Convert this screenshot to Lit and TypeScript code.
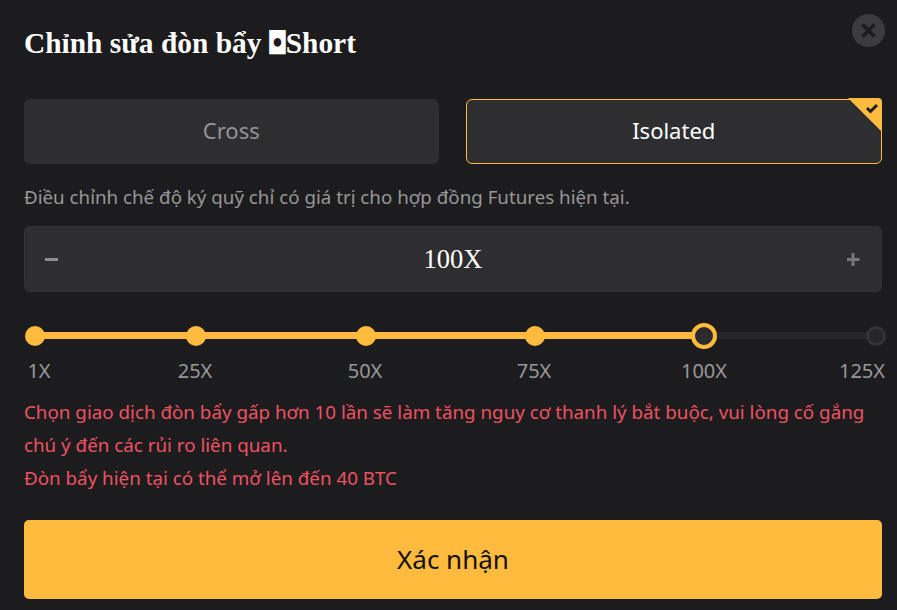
import { LitElement, html, css } from "lit";
import { customElement } from "lit/decorators.js";

const SANS = css`"Noto Sans", "Open Sans", sans-serif`;
const marks = [
  { label: "1X", dot: 11, text: 15, state: "on" },
  { label: "25X", dot: 172, text: 171, state: "on" },
  { label: "50X", dot: 342, text: 341, state: "on" },
  { label: "75X", dot: 511, text: 510, state: "on" },
  { label: "100X", dot: 680, text: 680, state: "cur" },
  { label: "125X", dot: 852, text: 838, state: "off" },
];

@customElement("app-root")
export class AppRoot extends LitElement {
  static styles = css`
    :host {
      display: block;
      position: relative;
      width: 897px;
      height: 610px;
      box-sizing: border-box;
      padding: 0 15px 0 24px;
      background: #1c1c1e;
      font-family: ${SANS};
      overflow: hidden;
    }
    .close {
      position: absolute;
      top: 14px;
      right: 12px;
      width: 33px;
      height: 33px;
      display: block;
    }
    h1 {
      margin: 0;
      height: 99px;
      padding-top: 24px;
      box-sizing: border-box;
      font: bold 29.4px/38px "Liberation Serif", serif;
      color: #fff;
      white-space: nowrap;
    }
    .glyph {
      display: inline-block;
      width: 19px;
      margin-left: -2px;
      font: 27px/0 "DejaVu Sans", sans-serif;
      transform: translateY(-1px) scaleY(1.17);
      transform-origin: 50% 50%;
    }
    .modes {
      display: flex;
      gap: 27px;
    }
    .mode {
      position: relative;
      flex: 1;
      height: 65px;
      box-sizing: border-box;
      display: flex;
      align-items: center;
      justify-content: center;
      padding-bottom: 4px;
      border-radius: 6px;
      background: #2e2e30;
      font-size: 22px;
      color: #949494;
    }
    .mode.sel {
      border: 1px solid #ffbb3d;
      color: #fff;
    }
    .corner {
      position: absolute;
      top: -2px;
      right: -1px;
      width: 34px;
      height: 34px;
      display: block;
    }
    .hint {
      margin: 0;
      height: 62px;
      font-size: 18.75px;
      line-height: 26px;
      padding-top: 20px;
      box-sizing: border-box;
      color: #979797;
      white-space: nowrap;
    }
    .stepper {
      height: 66px;
      box-sizing: border-box;
      padding: 0 20px 0 20px;
      display: flex;
      align-items: center;
      justify-content: space-between;
      border: 1px solid #343436;
      border-radius: 6px;
      background: #2e2e30;
    }
    .stepper svg {
      display: block;
    }
    .value {
      font: 26.5px/32px "Liberation Serif", serif;
      color: #fff;
    }
    .slider {
      position: relative;
      height: 104px;
    }
    .rail,
    .fill {
      position: absolute;
      top: 40px;
      height: 7px;
    }
    .rail {
      left: 11px;
      right: 6px;
      background: #262628;
    }
    .fill {
      left: 11px;
      width: 669px;
      background: #ffbb3d;
    }
    .dot {
      position: absolute;
      top: 43.5px;
      width: 20px;
      height: 20px;
      box-sizing: border-box;
      border-radius: 50%;
      transform: translate(-50%, -50%);
      background: #ffbb3d;
    }
    .dot.cur {
      width: 26px;
      height: 26px;
      background: #2b2b2d;
      border: 4px solid #ffbb3d;
    }
    .dot.off {
      background: #262628;
      border: 3px solid #333335;
    }
    .tick {
      position: absolute;
      top: 66px;
      font-size: 20px;
      line-height: 26px;
      color: #979797;
      transform: translateX(-50%);
    }
    .warn {
      margin: 0;
      height: 124px;
      width: 858px;
      font-size: 18.8px;
      line-height: 33px;
      color: #ee5261;
    }
    .confirm {
      display: flex;
      align-items: center;
      justify-content: center;
      width: 858px;
      height: 79px;
      border: 0;
      padding: 0 0 2px;
      border-radius: 5px;
      background: #ffbb3d;
      color: #111;
      font-family: ${SANS};
      font-size: 26px;
    }
    .wrap {
      width: 858px;
    }
  `;

  render() {
    return html`
      <svg class="close" viewBox="0 0 33 33" aria-hidden="true">
        <circle cx="16.5" cy="16.5" r="16.5" fill="#3c3c3e" />
        <path d="M10.5 10.5 L22.5 22.5 M22.5 10.5 L10.5 22.5" stroke="#1c1c1e" stroke-width="3.4" />
      </svg>
      <div class="wrap">
        <h1>Chỉnh sửa đòn bẩy <span class="glyph">◘</span>Short</h1>
        <div class="modes">
          <div class="mode">Cross</div>
          <div class="mode sel">
            Isolated
            <svg class="corner" viewBox="0 0 34 34" aria-hidden="true">
              <path d="M0 0 H30 A4 4 0 0 1 34 4 V34 Z" fill="#ffbb3d" />
              <path d="M19 10 L22.5 13.5 L29 7" fill="none" stroke="#1c1c1e" stroke-width="3" />
            </svg>
          </div>
        </div>
        <p class="hint">Điều chỉnh chế độ ký quỹ chỉ có giá trị cho hợp đồng Futures hiện tại.</p>
        <div class="stepper">
          <svg width="14" height="14" viewBox="0 0 14 14" aria-hidden="true">
            <rect x="0" y="6" width="13" height="3" fill="#8e8e8e" />
          </svg>
          <span class="value">100X</span>
          <svg width="14" height="14" viewBox="1 0 14 14" aria-hidden="true">
            <path d="M0.5 7.5 H13.5 M7 1 V14" stroke="#77777a" stroke-width="3" />
          </svg>
        </div>
        <div class="slider">
          <div class="rail"></div>
          <div class="fill"></div>
          ${marks.map(
            (m) => html`
              <div class="dot ${m.state}" style="left:${m.dot}px"></div>
              <div class="tick" style="left:${m.text}px">${m.label}</div>
            `
          )}
        </div>
        <p class="warn">
          Chọn giao dịch đòn bẩy gấp hơn 10 lần sẽ làm tăng nguy cơ thanh lý bắt buộc, vui lòng cố gắng chú ý đến các rủi ro liên quan.<br />Đòn bẩy hiện tại có thể mở lên đến 40 BTC
        </p>
        <button class="confirm">Xác nhận</button>
      </div>
    `;
  }
}
